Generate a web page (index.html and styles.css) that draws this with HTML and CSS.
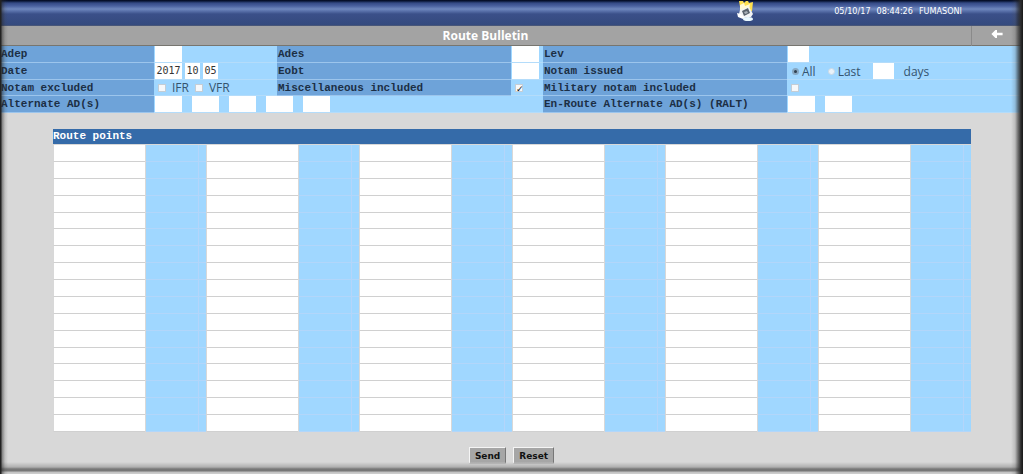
FILE: index.html
```html
<!DOCTYPE html>
<html lang="en">
<head>
<meta charset="utf-8">
<title>Route Bulletin</title>
<link rel="stylesheet" href="styles.css">
</head>
<body>
<header class="topbar">
  <svg class="logo" viewBox="0 0 18 20" aria-hidden="true">
    <path d="M2 0h4l1 2 2-2h2l1 2 4-1-1 9-3 2-8-1z" fill="#ffe04e"/>
    <path d="M3 4l4-2 1 3 5-2-1 6H3z" fill="#fff8d5"/>
    <path d="M3 9l9-3 4 7-2 3-8 1-4-4z" fill="#f2f4f6"/>
    <path d="M5 10l6-3 2 5-6 3z" fill="#59626c"/>
    <path d="M7 11l3-1 1 2-3 1z" fill="#a9b1b8"/>
    <path d="M0 12l4 1 4 4-2 1-5-2z" fill="#fff"/>
    <ellipse cx="11" cy="18" rx="5" ry="2" fill="#eaf9ff"/>
  </svg>
  <p class="session"><span>05/10/17</span><span>08:44:26</span><span>FUMASONI</span></p>
</header>
<div class="titlebar">
  <h1>Route Bulletin</h1>
  <a class="back" href="#" aria-label="Back">
    <svg viewBox="0 0 14 10" aria-hidden="true"><path d="M0 5l5-5h2v3.500h7v3H7V10H5z" fill="#fff"/></svg>
  </a>
</div>
<form class="bulletin">
  <div class="criteria">
    <label class="name" for="adep">Adep</label>
    <div class="field"><input class="box w27" id="adep"></div>
    <label class="name" for="ades">Ades</label>
    <div class="field"><input class="box w27" id="ades"></div>
    <label class="name" for="lev">Lev</label>
    <div class="field"><input class="box w21" id="lev"></div>

    <label class="name" for="year">Date</label>
    <div class="field date"><input class="box w27" id="year" value="2017"><input class="box w15" aria-label="Month" value="10"><input class="box w15" aria-label="Day" value="05"></div>
    <label class="name" for="eobt">Eobt</label>
    <div class="field"><input class="box w27" id="eobt"></div>
    <span class="name">Notam issued</span>
    <div class="field issued">
      <label class="option"><input class="radio" type="radio" name="issued" checked>All</label>
      <label class="option last"><input class="radio" type="radio" name="issued">Last</label>
      <label class="option days"><input class="box w21">days</label>
    </div>

    <span class="name">Notam excluded</span>
    <div class="field checks">
      <label class="option"><input class="check" type="checkbox">IFR</label>
      <label class="option"><input class="check" type="checkbox">VFR</label>
    </div>
    <label class="name" for="misc">Miscellaneous included</label>
    <div class="field checks"><input class="check" type="checkbox" id="misc" checked></div>
    <label class="name" for="military">Military notam included</label>
    <div class="field checks"><input class="check" type="checkbox" id="military"></div>

    <label class="name" for="alt">Alternate AD(s)</label>
    <div class="field alternates wide"><input class="box w27" id="alt"><input class="box w27" aria-label="Alternate 2"><input class="box w27" aria-label="Alternate 3"><input class="box w27" aria-label="Alternate 4"><input class="box w27" aria-label="Alternate 5"></div>
    <label class="name" for="ralt">En-Route Alternate AD(s) (RALT)</label>
    <div class="field alternates"><input class="box w27" id="ralt"><input class="box w27" aria-label="En-route alternate 2"></div>
  </div>
  <section class="route">
    <h2>Route points</h2>
    <div class="points" id="points"></div>
  </section>
  <div class="actions">
    <button type="button">Send</button>
    <button type="reset">Reset</button>
  </div>
</form>
<div class="frame"></div>
<script src="points.js"></script>
</body>
</html>
```
FILE: points.js
```js
const points = document.getElementById("points");
for (let i = 1; i <= 17 * 6; i++) {
  const cell = document.createElement("div");
  cell.className = "point";
  const input = document.createElement("input");
  input.setAttribute("aria-label", "Route point " + i);
  const note = document.createElement("span");
  note.className = "note";
  cell.append(input, note);
  points.append(cell);
}
```
FILE: styles.css
```css
* { box-sizing: border-box; }
body {
  margin: 0;
  min-height: 100vh;
  position: relative;
  background: #d8d8d8;
  font-family: "Open Sans", sans-serif;
}
h1, h2, p { margin: 0; }
input { margin: 0; padding: 0; border: 0; border-radius: 0; min-width: 0; }

.topbar {
  height: 26px;
  display: flex;
  justify-content: flex-end;
  align-items: flex-start;
  padding-right: 61px;
  background: linear-gradient(#03091d 0, #0a1738 1px, #344a85 3px, #4b62a0 6px, #6f88bd 9px, #5a72ab 11px, #3b5089 14px, #344a7e 25px, #5b6273 26px);
}
.logo { width: 18px; height: 20px; margin: 1px 79px 0 0; }
.session {
  display: flex;
  gap: 6px;
  margin-top: 5px;
  color: #fff;
  font: 9px/13px "DejaVu Sans Condensed", "DejaVu Sans", sans-serif;
}
.titlebar {
  height: 20px;
  display: grid;
  grid-template-columns: 1fr 52px;
  background: #a3a3a3;
  border-bottom: 1px solid #77756f;
}
.titlebar h1 {
  text-align: center;
  color: #fff;
  font: 700 12px/20px "Open Sans", sans-serif;
}
.back {
  border-left: 1px solid #8a8a8a;
  display: flex;
  align-items: center;
  justify-content: center;
  padding: 0 2px 4px 0;
}
.back svg { width: 14px; height: 8px; }

.criteria {
  display: grid;
  grid-template-columns: 154fr 123fr 234fr 32fr 244fr 236fr;
  grid-template-rows: 17px 17px 16px 17px;
}
.name {
  background: #6ea3d9;
  border-bottom: 1px solid #9cc5ec;
  padding-left: 1px;
  color: #1c2f45;
  font: 700 11px/16px "Liberation Mono", monospace;
  white-space: nowrap;
}
.field {
  display: flex;
  align-items: center;
  padding-left: 1px;
  background: #a0d7ff;
  border-bottom: 1px solid #b4dcfa;
}
.wide { grid-column: span 3; }
.box {
  height: 16px;
  background: #fff;
  color: #333;
  text-align: center;
  font: 10px/16px "DejaVu Sans Mono", monospace;
}
.w27 { width: 27px; }
.w21 { width: 21px; }
.w15 { width: 15px; }
.date { gap: 3px; }
.alternates { gap: 10px; }
.option {
  display: flex;
  align-items: center;
  gap: 6px;
  color: #34536e;
  font: 12px/15px "Open Sans", sans-serif;
}
.checks { gap: 6px; padding-left: 4px; }
.check {
  appearance: none;
  width: 8px;
  height: 8px;
  display: grid;
  place-items: center;
  background: #f6f8fa;
  border: 1px solid #c4cdd5;
}
.check:checked::before {
  content: "✓";
  color: #111;
  font: 700 9px/8px "DejaVu Sans", sans-serif;
}
.issued { padding-left: 5px; }
.issued .option { gap: 3px; }
.radio {
  appearance: none;
  width: 7px;
  height: 7px;
  border: 1px solid #cbd9e4;
  border-radius: 50%;
  background: #e9f2f9;
}
.radio:checked { background: #30404f; border: 2px solid #87a8c3; }
.issued .last { margin-left: 12px; }
.issued .days { margin-left: 12px; gap: 10px; }

.route { margin: 16px 52px 0 53px; }
.route h2 {
  height: 15px;
  background: #356ba9;
  color: #fff;
  font: 700 11px/15px "Liberation Mono", monospace;
}
.points {
  height: 288px;
  padding-top: 1px;
  display: grid;
  grid-template-columns: repeat(6, 1fr);
  grid-template-rows: repeat(17, 1fr);
}
.point {
  display: grid;
  grid-template-columns: 92fr 60fr;
  gap: 1px;
}
.point input { width: 100%; height: 100%; background: #fff; border-bottom: 1px solid #d0d0d0; border-left: 1px solid #d8d8d8; }
.note { background: #a0d7ff; border-bottom: 1px solid #b2d6fa; display: flex; justify-content: flex-end; }
.note::after { content: ""; width: 7px; border-left: 1px solid #b4d5fa; }

.actions {
  display: flex;
  justify-content: center;
  gap: 7px;
  padding: 15px 0 9px;
}
.actions button {
  height: 17px;
  padding: 0 5px;
  border: 1px solid;
  border-color: #f5f5f5 #777 #777 #f5f5f5;
  background: #a6a6a6;
  color: #111;
  font: 700 9px/14px "DejaVu Sans", sans-serif;
}
/* Bevelled edge over the whole window */
.frame {
  position: absolute;
  inset: 0;
  pointer-events: none;
  background:
    linear-gradient(to right, #222 0, #222 1px, rgba(40,40,40,.5) 2px, rgba(60,60,60,.15) 5px, transparent 8px) left / 10px 100% no-repeat,
    linear-gradient(to left, #181818 0, #2c2c2c 2px, rgba(40,40,40,.6) 5px, rgba(80,80,80,.2) 8px, transparent 12px) right / 12px 100% no-repeat,
    linear-gradient(to top, #d0d0d0 0, #c0c0c0 2px, #777 3px, #777 5px, #b0b0b0 7px, #c8c8c8 10px, transparent 12px) bottom / 100% 12px no-repeat;
}
```
